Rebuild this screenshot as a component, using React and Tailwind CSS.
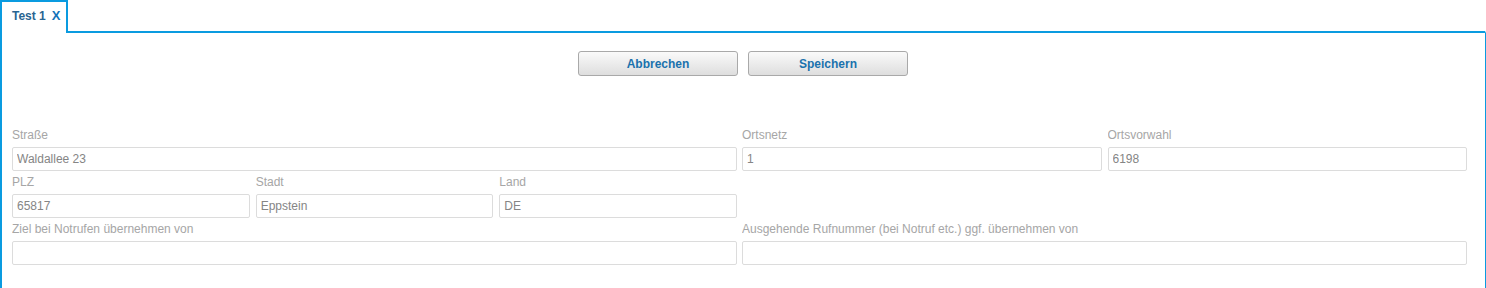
import React from 'react';

function Field({ label, value, className = '' }) {
    return (
        <div className={`flex flex-col ${className}`}>
            <label className="h-[21px] pt-[1px] text-[12px] leading-[16px] text-[#a6a6a6] truncate">{label}</label>
            <input
                readOnly
                value={value}
                className="h-[24px] w-full px-[4px] border border-[#dcdcdc] rounded-[2px] text-[12px] text-[#858585] bg-white outline-none"
            />
        </div>
    );
}

export default function App() {
    return (
        <div className="w-[1486px] h-[288px] bg-white overflow-hidden" style={{ fontFamily: '"Liberation Sans", Arial, sans-serif' }}>
            {/* Tab strip */}
            <div className="flex h-[33px]">
                <div className="w-[68px] h-[33px] border-l-2 border-t-2 border-r-2 border-[#0a9be0] bg-white flex items-center pl-[10px] pb-[3px] gap-[6px]">
                    <span className="text-[12px] font-bold text-[#2a6592]">Test 1</span>
                    <span className="text-[13px] font-bold text-[#1473b8]">X</span>
                </div>
                <div className="flex-1 border-b-2 border-[#0a9be0] border-r border-r-transparent" />
            </div>

            {/* Panel */}
            <div className="h-[255px] border-l-2 border-r border-[#0a9be0] pl-[10px] pr-[18px]">
                <div className="flex justify-center gap-[10px] pt-[18px] -ml-[11px] -mr-[18px]">
                    <button className="w-[160px] h-[25px] rounded-[3px] border border-[#a9a9a9] bg-gradient-to-b from-[#fafafa] to-[#dedede] text-[12px] font-bold text-[#1a72ad]">
                        Abbrechen
                    </button>
                    <button className="w-[160px] h-[25px] rounded-[3px] border border-[#a9a9a9] bg-gradient-to-b from-[#fafafa] to-[#dedede] text-[12px] font-bold text-[#1a72ad]">
                        Speichern
                    </button>
                </div>

                <div className="mt-[50px] flex flex-col gap-[2px]">
                    <div className="grid grid-cols-2 gap-x-[5px]">
                        <Field label="Straße" value="Waldallee 23" />
                        <div className="grid grid-cols-2 gap-x-[6px]">
                            <Field label="Ortsnetz" value="1" />
                            <Field label="Ortsvorwahl" value="6198" />
                        </div>
                    </div>
                    <div className="grid grid-cols-2 gap-x-[5px]">
                        <div className="grid grid-cols-3 gap-x-[6px]">
                            <Field label="PLZ" value="65817" />
                            <Field label="Stadt" value="Eppstein" />
                            <Field label="Land" value="DE" />
                        </div>
                        <div />
                    </div>
                    <div className="grid grid-cols-2 gap-x-[5px]">
                        <Field label="Ziel bei Notrufen übernehmen von" value="" />
                        <Field label="Ausgehende Rufnummer (bei Notruf etc.) ggf. übernehmen von" value="" />
                    </div>
                </div>
            </div>
        </div>
    );
}
